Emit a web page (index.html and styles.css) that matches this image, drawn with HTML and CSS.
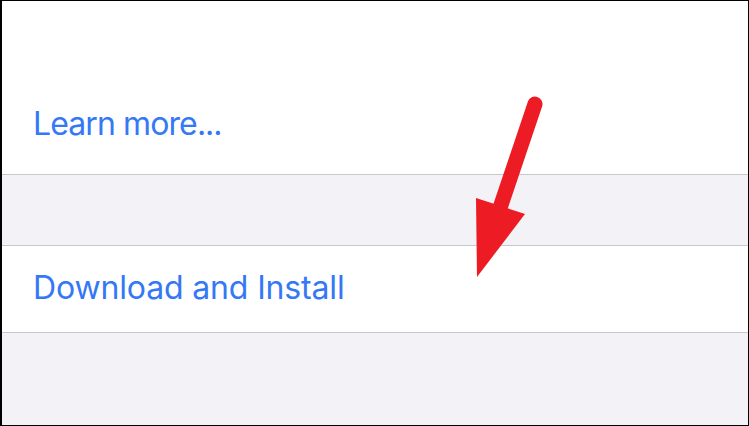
FILE: index.html
```html
<!DOCTYPE html>
<html lang="en">

<head>
    <meta charset="UTF-8">
    <meta name="viewport" content="width=device-width, initial-scale=1.0">
    <title>Software Update</title>
    <link rel="stylesheet" href="styles.css">
</head>

<body>
    <div id="wrap">
        <div class="group top">
            <a class="cell-link learn" href="#">Learn more<span class="dots">...</span></a>
        </div>
        <div class="spacer"></div>
        <div class="group row">
            <a class="cell-link" href="#">Download and Install</a>
        </div>
        <div class="spacer fill"></div>

        <!-- red arrow pointing at the button -->
        <svg class="arrow" width="749" height="426" viewBox="0 0 749 426">
            <line x1="535" y1="104" x2="500" y2="208" stroke="#ed1c24" stroke-width="15" stroke-linecap="round" />
            <polygon points="476,198 525,214 477,277" fill="#ed1c24" />
        </svg>
    </div>
</body>

</html>
```

FILE: styles.css
```css
html, body {
    margin: 0;
    padding: 0;
}

body {
    font-family: Inter, "Liberation Sans", sans-serif;
    background: #fff;
}

#wrap {
    position: relative;
    box-sizing: border-box;
    width: 749px;
    height: 426px;
    border: 1px solid #000;
    border-left-width: 2px;
    display: flex;
    flex-direction: column;
    background: #f2f2f7;
    overflow: hidden;
}

.group {
    background: #fff;
    border-bottom: 1px solid #c8c7cc;
    padding-left: 31px;
}

.group.top {
    height: 174px;
    box-sizing: border-box;
    padding-top: 103px;
}

.group.row {
    border-top: 1px solid #c8c7cc;
    padding-top: 22px;
    height: 64px;
}

.spacer {
    height: 70px;
}

.spacer.fill {
    flex: 1;
}

.cell-link {
    display: block;
    font-size: 32px;
    line-height: 40px;
    color: #3478f6;
    text-decoration: none;
    letter-spacing: -0.15px;
}

.cell-link.learn {
    letter-spacing: -0.9px;
}

.dots {
    letter-spacing: -1px;
}

.arrow {
    position: absolute;
    left: -2px;
    top: -1px;
}
```
